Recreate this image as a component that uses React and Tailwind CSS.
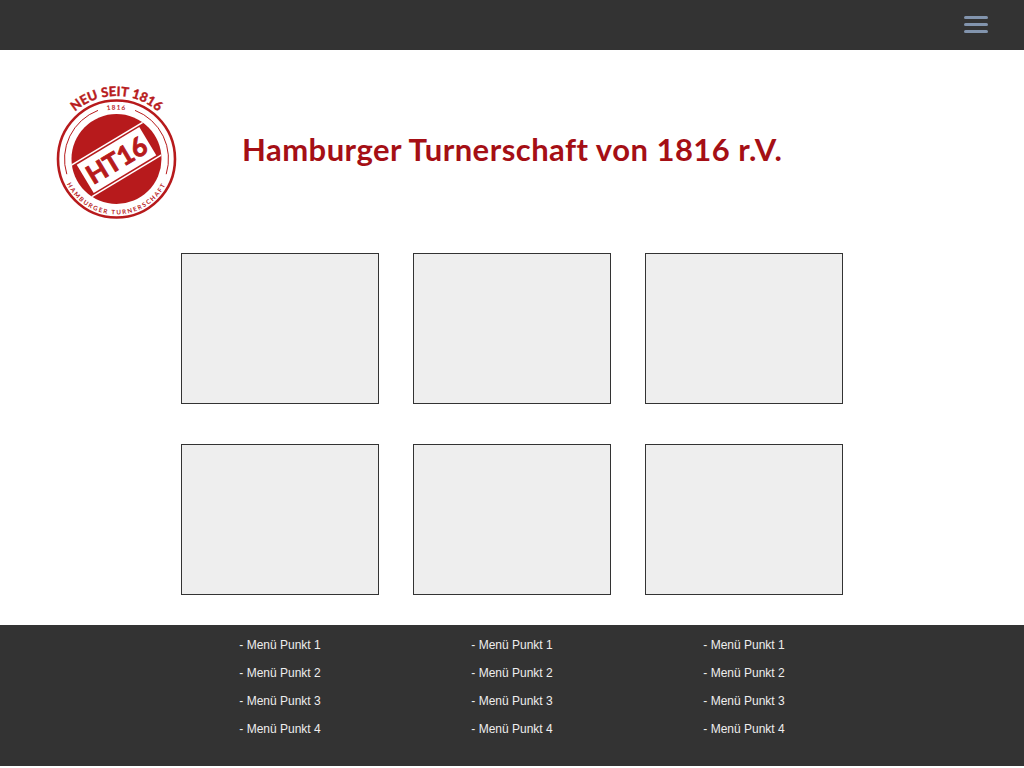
const RED = '#b71a1c';
const menu = ['- Menü Punkt 1', '- Menü Punkt 2', '- Menü Punkt 3', '- Menü Punkt 4'];

const Logo = () => (
  <svg width="135" height="145" viewBox="0 0 135 145" className="block shrink-0">
    <defs>
      <path id="arcTop" d="M 3.5 79 A 63 63 0 0 1 129.5 79" />
      <path id="arcMid" d="M 17 79 A 49.5 49.5 0 0 1 116 79" />
      <path id="arcBottom" d="M 11 79 A 55.5 55.5 0 0 0 122 79" />
      <clipPath id="disc">
        <circle cx="66.5" cy="79" r="45" />
      </clipPath>
    </defs>
    <circle cx="66.5" cy="79" r="58.5" fill="none" stroke={RED} strokeWidth="2.6" />
    <path d="M 16.8 94.2 A 52 52 0 0 1 48 30.4" fill="none" stroke={RED} strokeWidth="1" />
    <path d="M 85 30.4 A 52 52 0 0 1 116.2 94.2" fill="none" stroke={RED} strokeWidth="1" />
    <circle cx="66.5" cy="79" r="45" fill={RED} />
    <g clipPath="url(#disc)">
      <g transform="rotate(-31 66.5 80)">
        <rect x="10" y="60.5" width="115" height="1.5" fill="#fff" />
        <rect x="10" y="98" width="115" height="1.5" fill="#fff" />
        <rect x="30" y="63.5" width="73" height="33" fill="#fff" />
      </g>
    </g>
    <text
      x="66.5"
      y="89.5"
      transform="rotate(-31 66.5 80)"
      textAnchor="middle"
      fill={RED}
      stroke={RED}
      strokeWidth="0.9"
      fontFamily="Lato, sans-serif"
      fontWeight="700"
      fontSize="26"
    >
      HT16
    </text>
    <text fill={RED} stroke={RED} strokeWidth="0.45" fontFamily="Lato, sans-serif" fontWeight="700" fontSize="13" letterSpacing="0.1">
      <textPath href="#arcTop" startOffset="50%" textAnchor="middle">NEU SEIT 1816</textPath>
    </text>
    <text fill={RED} fontFamily="Lato, sans-serif" fontWeight="700" fontSize="6.5" letterSpacing="1">
      <textPath href="#arcMid" startOffset="50%" textAnchor="middle">1816</textPath>
    </text>
    <text fill={RED} fontFamily="Lato, sans-serif" fontWeight="700" fontSize="6.2" letterSpacing="1.5">
      <textPath href="#arcBottom" startOffset="50%" textAnchor="middle">HAMBURGER TURNERSCHAFT</textPath>
    </text>
  </svg>
);

export default function App() {
  return (
    <div className="min-h-screen bg-white font-['Liberation_Sans',sans-serif]">
      <header className="flex h-[50px] items-start justify-end bg-[#333333] pr-[36px] pt-[16px]">
        <button className="flex w-[24px] flex-col gap-[4px]">
          <span className="h-[3px] rounded-sm bg-[#8294ad]" />
          <span className="h-[3px] rounded-sm bg-[#8294ad]" />
          <span className="h-[3px] rounded-sm bg-[#8294ad]" />
        </button>
      </header>

      <div className="flex h-[203px] pl-[50px] pt-[30px]">
        <Logo />
        <h1 className="ml-[57px] mt-[47px] font-['Lato',sans-serif] text-[31px] font-bold leading-[44px] tracking-[0.47px] text-[#a50f15]">
          Hamburger Turnerschaft von 1816 r.V.
        </h1>
      </div>

      <main className="mx-auto grid w-[662px] grid-cols-3 gap-x-[34px] gap-y-[40px] pb-[30px]">
        {[1, 2, 3, 4, 5, 6].map((n) => (
          <div key={n} className="h-[151px] border border-[#333333] bg-[#eeeeee]" />
        ))}
      </main>

      <footer className="h-[141px] bg-[#333333] pt-[6px]">
        <div className="mx-auto grid w-[662px] grid-cols-3 gap-x-[34px]">
          {[1, 2, 3].map((col) => (
            <ul key={col} className="text-center text-[12px] leading-[28px] text-[#eeeeee]">
              {menu.map((item) => (
                <li key={item}>{item}</li>
              ))}
            </ul>
          ))}
        </div>
      </footer>
    </div>
  );
}
